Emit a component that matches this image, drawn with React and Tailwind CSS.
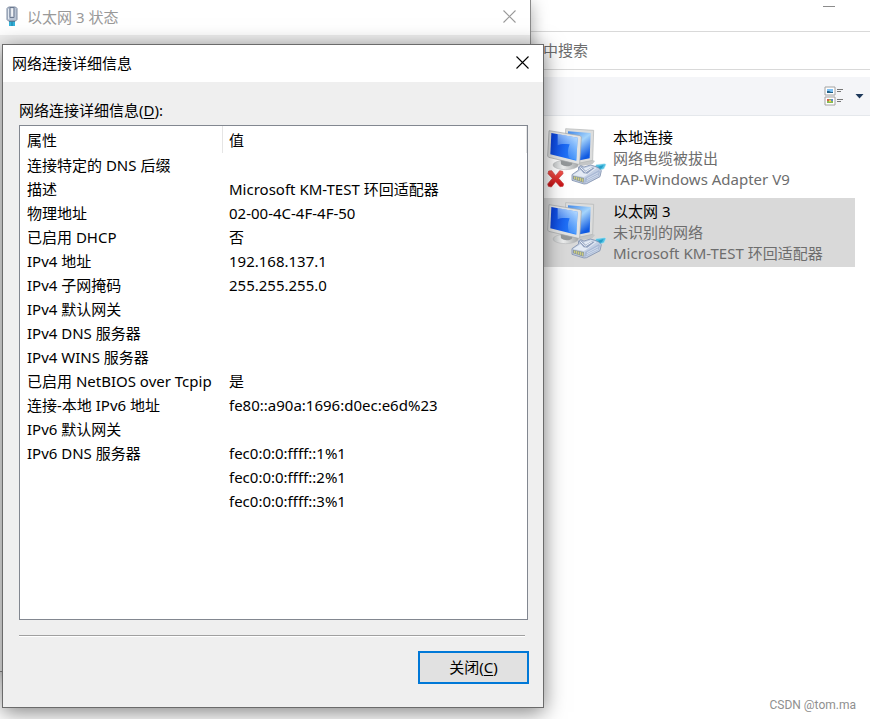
import React, { useState } from "react";

const DETAILS = [
  { label: "连接特定的 DNS 后缀", value: "" },
  { label: "描述", value: "Microsoft KM-TEST 环回适配器" },
  { label: "物理地址", value: "02-00-4C-4F-4F-50" },
  { label: "已启用 DHCP", value: "否" },
  { label: "IPv4 地址", value: "192.168.137.1" },
  { label: "IPv4 子网掩码", value: "255.255.255.0" },
  { label: "IPv4 默认网关", value: "" },
  { label: "IPv4 DNS 服务器", value: "" },
  { label: "IPv4 WINS 服务器", value: "" },
  { label: "已启用 NetBIOS over Tcpip", value: "是" },
  { label: "连接-本地 IPv6 地址", value: "fe80::a90a:1696:d0ec:e6d%23" },
  { label: "IPv6 默认网关", value: "" },
  { label: "IPv6 DNS 服务器", value: "fec0:0:0:ffff::1%1" },
  { label: "", value: "fec0:0:0:ffff::2%1" },
  { label: "", value: "fec0:0:0:ffff::3%1" },
];

const CONNECTIONS = [
  {
    name: "本地连接",
    status: "网络电缆被拔出",
    device: "TAP-Windows Adapter V9",
    unplugged: true,
  },
  {
    name: "以太网 3",
    status: "未识别的网络",
    device: "Microsoft KM-TEST 环回适配器",
    unplugged: false,
  },
];

function CloseIcon({ className }) {
  return (
    <svg className={className} width="13" height="13" viewBox="0 0 13 13" fill="none" stroke="currentColor" strokeWidth="1.1">
      <path d="M0.5 0.5l12 12M12.5 0.5l-12 12" />
    </svg>
  );
}

function PlugIcon() {
  return (
    <svg width="12" height="21" viewBox="0 0 12 21">
      <path d="M3 14h6v6H3z" fill="#35b3da" />
      <path d="M3 14h6v2H3z" fill="#1b7396" />
      <path d="M5.5 16h1v4h-1z" fill="#1f7fa5" />
      <path d="M1 2.5L2.5 1h7L11 2.5v11L9.5 15h-7L1 13.5z" fill="#b9c4d4" stroke="#7d8aa0" />
      <path d="M2.5 3v10" stroke="#e3e9f1" />
      <path d="M4 1.5h4v10H4z" fill="#cfd6e1" stroke="#6c7a91" />
      <path d="M5.5 2.5h1.2v7.5H5.5z" fill="#fff" />
    </svg>
  );
}

// Two monitors with a network plug, plus the red cross when unplugged
function ConnectionIcon({ id, unplugged }) {
  const screen = `${id}-screen`;
  const back = `${id}-back`;
  const cross = `${id}-cross`;
  const base = `${id}-base`;
  const shine = `${id}-shine`;
  return (
    <svg className="shrink-0" width="60" height="62" viewBox="36 36 180 186">
      <defs>
        <linearGradient id={screen} x1="0" y1="0.3" x2="1" y2="0.5">
          <stop offset="0" stopColor="#0a3fd6" />
          <stop offset="0.5" stopColor="#1a66f2" />
          <stop offset="1" stopColor="#2d86fb" />
        </linearGradient>
        <linearGradient id={shine} x1="0.8" y1="0" x2="0.3" y2="1">
          <stop offset="0" stopColor="#d8efff" stopOpacity="0.85" />
          <stop offset="1" stopColor="#8cc4ff" stopOpacity="0.1" />
        </linearGradient>
        <linearGradient id={back} x1="0" y1="0" x2="0.6" y2="1">
          <stop offset="0" stopColor="#3f87ea" />
          <stop offset="0.5" stopColor="#a5d4fb" />
          <stop offset="1" stopColor="#0f5ae2" />
        </linearGradient>
        <linearGradient id={base} x1="0" y1="0" x2="1" y2="0">
          <stop offset="0" stopColor="#c4c7c8" />
          <stop offset="0.4" stopColor="#eff0f0" />
          <stop offset="1" stopColor="#a3a6a7" />
        </linearGradient>
        <linearGradient id={cross} x1="0" y1="0" x2="0" y2="1">
          <stop offset="0" stopColor="#f4554c" />
          <stop offset="1" stopColor="#c40d12" />
        </linearGradient>
      </defs>
      <path d="M128 140l38-8 14 6-8 10-38 6z" fill="#c4c6c7" />
      <path d="M92 41l84 5-3 90-44 9-40-9z" fill="#dcdddd" stroke="#b1b3b4" strokeWidth="2" />
      <path d="M99 49l68 5-3 76-30 6-36-8z" fill={`url(#${back})`} />
      <ellipse cx="92" cy="150" rx="38" ry="14" fill={`url(#${base})`} stroke="#b3b5b6" strokeWidth="1.5" />
      <path d="M76 126l40 10-6 14c-9 6-24 5-32-2z" fill="#94989a" />
      <path d="M42 47l93 15 4 4-5 80-4 2-89-21-3-4z" fill="#e2e3e3" stroke="#a3a6a7" strokeWidth="2" />
      <path d="M49 54l79 14-4 69-78-19z" fill={`url(#${screen})`} />
      <path d="M68 57l60 11-4 67-22-5c-5-16-4-28 2-42-14-2-28-2-36 3z" fill={`url(#${shine})`} />
      <path d="M176 160l8-11 24-3 5 2-6 13-16 6z" fill="#54c2e4" stroke="#bfe6f2" strokeWidth="1.5" />
      <path d="M181 159l12-5 13-4-5 9-11 5z" fill="#259fc9" />
      <path d="M111 179l20-14-1-9 7-4 10 4 19-6 11 3 13 5 9 9-4 18-40 21-8 1-36-11z" fill="#c3cfe3" stroke="#8291ae" strokeWidth="2.5" strokeLinejoin="round" />
      <path d="M114 180l20-13 14-7 20-6 17 5-33 24-6 3z" fill="#e4ebf5" />
      <path d="M150 189l42-24 3 5-4 12-38 20-6 2z" fill="#a9b9d5" />
      <path d="M156 191l34-18M155 197l34-17" stroke="#d8e2f1" strokeWidth="2.5" />
      <path d="M131 157l7-3 14 13 19-11 8 3-22 17-11-1z" fill="#93a3c0" />
      <path d="M136 157l15 14 21-13" fill="none" stroke="#f5f8fc" strokeWidth="3" />
      <path d="M114 182l33 7-1 14-32-10z" fill="#8f9a97" />
      <path d="M119 185v7M125 186v8M131 188v8M137 189v9M143 191v9" stroke="#dad77c" strokeWidth="3" />
      {unplugged && (
        <path
          d="M41 168l9-1 12 15 12-15 9 2 1 7-13 14 15 17-2 7-9 1-13-15-13 16-9-2-2-7 14-17-13-14z"
          fill={`url(#${cross})`}
          stroke="#c8393b"
          strokeWidth="2"
          strokeLinejoin="round"
        />
      )}
    </svg>
  );
}

function ViewIcon() {
  return (
    <svg width="19" height="20" viewBox="0 0 19 20">
      <path d="M1 1h10v8H1zM1 11h10v8H1z" fill="#fff" stroke="#a2a2a2" />
      <path d="M3 3h6v4H3z" fill="#7cc0f5" />
      <path d="M3 5h2l2 1h2v1H3z" fill="#1e5e83" />
      <path d="M3 13h6v4H3z" fill="#83b954" />
      <path d="M3 13h2v2H3z" fill="#d85a4e" />
      <path d="M7 13h2v2H7z" fill="#6489d1" />
      <path d="M5 14h2v2H5z" fill="#e9cf50" />
      <path d="M13 3.5h6M13 5.5h4M13 13.5h6M13 15.5h4" stroke="#777" />
    </svg>
  );
}

function ExplorerWindow() {
  const [selected, setSelected] = useState("以太网 3");

  return (
    <main className="flex min-h-screen flex-col bg-white pl-[531px]">
      <div className="flex h-8 items-start justify-end border-b border-[#d9d9d9] pr-[35px]">
        <button aria-label="最小化" className="flex h-3 w-3 items-center">
          <span className="h-px w-full bg-[#8c8c8c]" />
        </button>
      </div>
      <div className="flex h-[38px] items-center border-b border-[#d9d9d9] pl-3">
        <input
          type="text"
          aria-label="搜索"
          placeholder="中搜索"
          className="h-9 w-full bg-transparent pb-[2px] outline-none placeholder:text-[#6d6d6d]"
        />
      </div>
      <div className="mt-[7px] flex h-[39px] items-center justify-end gap-3 border-b border-[#e5e8ec] bg-[#f4f5f8] pr-[6px]">
        <button aria-label="视图">
          <ViewIcon />
        </button>
        <button aria-label="更多选项">
          <svg width="9" height="5" viewBox="0 0 9 5">
            <path d="M0.5 0h8L4.5 4.5z" fill="#1e395b" />
          </svg>
        </button>
      </div>
      <ul className="mt-2 flex flex-col gap-[5px] pr-[15px] pl-3">
        {CONNECTIONS.map((c, i) => (
          <li key={c.name}>
            <button
              onClick={() => setSelected(c.name)}
              className={
                "flex w-full gap-[6px] py-[3px] pl-1 text-left leading-[21px] " +
                (selected === c.name ? "bg-[#d9d9d9]" : "")
              }
            >
              <ConnectionIcon id={`conn${i}`} unplugged={c.unplugged} />
              <span className="flex min-w-0 flex-col whitespace-nowrap text-[#6d6d6d]">
                <span className="text-black">{c.name}</span>
                <span>{c.status}</span>
                <span>{c.device}</span>
              </span>
            </button>
          </li>
        ))}
      </ul>
      <footer className="mt-auto pr-[14px] pb-[6px] text-right font-['Roboto',sans-serif] text-xs leading-4 text-[#8f8f8f]">
        CSDN @tom.ma
      </footer>
    </main>
  );
}

function StatusWindow() {
  return (
    <section className="absolute top-0 left-0 w-[531px] border-r border-b border-[#8a8a8a] bg-[#efefef] pb-[636px] shadow-[0_4px_16px_rgba(0,0,0,0.35)]">
      <header className="flex h-[35px] items-center bg-white pr-[14px] pb-[2px] pl-[6px] text-[#999]">
        <PlugIcon />
        <h2 className="ml-[9px] flex-1">以太网 3 状态</h2>
        <button aria-label="关闭">
          <CloseIcon />
        </button>
      </header>
    </section>
  );
}

function DetailsDialog() {
  return (
    <section
      role="dialog"
      aria-labelledby="details-title"
      className="absolute top-[44px] left-[2px] w-[542px] border border-[#6b6b6b] bg-[#efefef] shadow-[0_4px_20px_rgba(0,0,0,0.5)]"
    >
      <header className="flex h-[37px] items-center bg-white pr-[14px] pb-[2px] pl-[9px]">
        <h1 id="details-title" className="flex-1">网络连接详细信息</h1>
        <button aria-label="关闭">
          <CloseIcon />
        </button>
      </header>

      <div className="px-4 pt-4 pb-[23px]">
        <p id="details-label" className="pb-[2px] leading-[25px]">
          网络连接详细信息(<u className="underline-offset-2">D</u>):
        </p>

        <div className="mr-[-1px] border border-[#828790] bg-white pb-[106px]">
          <table aria-labelledby="details-label" className="w-full table-fixed border-separate border-spacing-0 text-left whitespace-nowrap">
            <thead>
              <tr className="h-[27px]">
                <th className="w-[203px] border-r border-[#e5e5e5] p-0 pl-[7px] font-normal">属性</th>
                <th className="border-r border-[#e5e5e5] p-0 pl-[6px] font-normal">值</th>
              </tr>
            </thead>
            <tbody>
              {DETAILS.map((row, idx) => (
                <tr key={idx} className="h-6">
                  <td className="p-0 pl-[7px]">{row.label}</td>
                  <td className="p-0 pl-[6px]">{row.value}</td>
                </tr>
              ))}
            </tbody>
          </table>
        </div>

        <hr className="mt-[15px] mr-[2px] h-[2px] border-t border-b border-t-[#a0a0a0] border-b-white" />

        <div className="mr-[-2px] mt-[14px] flex justify-end">
          <button className="h-[33px] w-[111px] border-2 border-[#0078d7] bg-[#e1e1e1] pb-[2px]">
            关闭(<u className="underline-offset-2">C</u>)
          </button>
        </div>
      </div>
    </section>
  );
}

export default function App() {
  return (
    <div className="relative min-h-screen overflow-hidden font-['Noto_Sans','Noto_Sans_CJK_SC',sans-serif] text-[15px] leading-6 text-black">
      <ExplorerWindow />
      <StatusWindow />
      <DetailsDialog />
    </div>
  );
}
